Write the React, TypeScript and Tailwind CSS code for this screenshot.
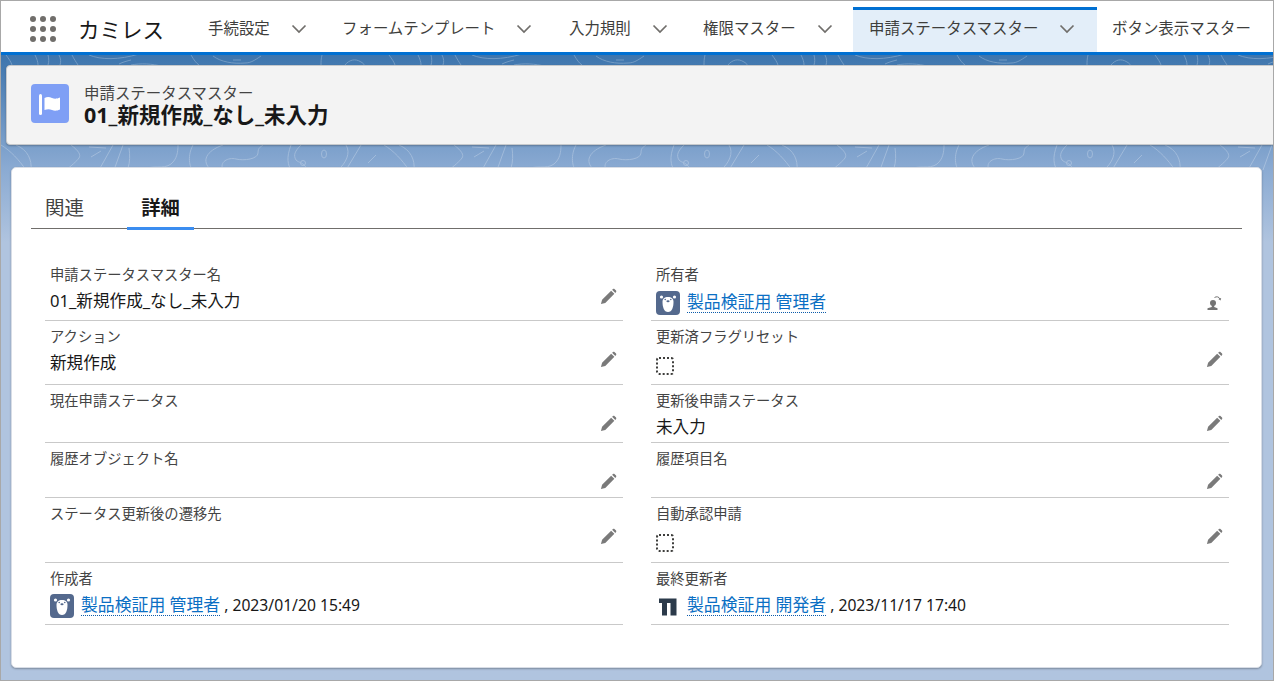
const font = { fontFamily: '"Noto Sans", "Noto Sans CJK JP", sans-serif' };

const navItems = [
  { label: "手続設定", w: "w-[134px]" },
  { label: "フォームテンプレート", w: "w-[227px]" },
  { label: "入力規則", w: "w-[134px]" },
  { label: "権限マスター", w: "w-[154px]" },
];

function Chevron() {
  return (
    <svg width="16" height="16" viewBox="0 0 16 16" className="shrink-0 text-[#706e6b]">
      <path d="M1.500 4.500 8 11l6.500-6.500" fill="none" stroke="currentColor" strokeWidth="1.700" />
    </svg>
  );
}

function AppGrid() {
  const dots = [0, 1, 2, 3, 4, 5, 6, 7, 8];
  return (
    <div className="grid grid-cols-3 gap-[4px] w-[26px]">
      {dots.map((d) => (
        <span key={d} className="w-[6px] h-[6px] rounded-full bg-[#706e6b]" />
      ))}
    </div>
  );
}

function Pencil() {
  return (
    <svg width="17" height="17" viewBox="0 0 18 18" className="text-[#7a7a7a]">
      <path d="M1 17l1.200-4.600L11.800 2.800l3.400 3.400L5.600 15.800 1 17z M12.800 1.800l1-.8c.5-.4 1.100-.4 1.500 0l1.700 1.700c.4.400.4 1 0 1.500l-.8 1z" fill="currentColor" />
    </svg>
  );
}

function ChangeOwner() {
  return (
    <svg width="16" height="16" viewBox="0 0 16 16" className="text-[#747474]">
      <circle cx="6" cy="8" r="3" fill="currentColor" />
      <path d="M4.800 10h2.400v2l3.300 1.300V15H.5v-1.700L4.800 12z" fill="currentColor" />
      <path d="M7.500 2.500c2-1.300 4.500-.8 5.500 1.500" fill="none" stroke="currentColor" strokeWidth="1" />
      <path d="M11.300 4l2.300 1.600.6-2.700z" fill="currentColor" />
    </svg>
  );
}

function Bear() {
  return (
    <svg width="24" height="24" viewBox="0 0 24 24" className="shrink-0">
      <rect width="24" height="24" rx="4" fill="#54698d" />
      <circle cx="5.500" cy="6" r="1.600" fill="#fff" />
      <circle cx="18.500" cy="6" r="1.600" fill="#fff" />
      <path d="M12 6c3.500 0 5.500 1.500 5.500 5 0 5-1.500 10-5.500 10s-5.500-5-5.500-10c0-3.500 2-5 5.500-5z" fill="#fff" />
      <circle cx="9.200" cy="8.500" r=".8" fill="#54698d" />
      <circle cx="14.800" cy="8.500" r=".8" fill="#54698d" />
      <ellipse cx="12" cy="10.200" rx="1.600" ry="1" fill="#54698d" />
    </svg>
  );
}

function DevLogo() {
  return (
    <svg width="24" height="24" viewBox="0 0 24 24" className="shrink-0">
      <path d="M3 4.500h17.500v17h-6V9H11v12.500H6V9H3z" fill="#2b3a4a" />
    </svg>
  );
}

function UserLink({ name }: { name: string }) {
  return (
    <a className="text-[#0b6fc4] text-[16.85px] border-b border-dotted border-[#0b5cab] leading-[20px] whitespace-nowrap">{name}</a>
  );
}

function EmptyCheck() {
  return <span className="block w-[18px] h-[18px] mt-[5px] rounded-[3px] border-2 border-dotted border-[#3e3e3c]" />;
}

function Field({ label, h, children, action, valueClass = "" }: { label: string; h: string; children?: React.ReactNode; action?: React.ReactNode; valueClass?: string }) {
  return (
    <div className={`relative border-b border-[#c9c9c9] px-[5px] pt-[6px] ${h}`}>
      <div className="text-[14.3px] leading-[20px] text-[#444444] whitespace-nowrap">{label}</div>
      <div className={`flex items-center gap-[7px] h-[28px] mt-[2px] text-[16.6px] text-[#181818] ${valueClass}`}>{children}</div>
      {action && <div className="absolute right-[6px] top-[30px]">{action}</div>}
    </div>
  );
}

// repeating topographic lines behind the page header
function Contours() {
  return (
    <svg className="absolute left-0 top-0 opacity-25" width="1274" height="115">
      <defs>
        <pattern id="topo" width="383" height="115" patternUnits="userSpaceOnUse">
          <g fill="none" stroke="#fff" strokeWidth="1">
            <path d="M5 0c3 4 5 7 6 10M34 0c2 4 3 7 3 10M47 0c1 4 1 7 0 10M58 0c2 4 2 7 1 10M71 0c2 4 4 7 6 10" />
            <path d="M88 0c12 5 30 5 50-1M118 9c4-2 8-3 12-4M130 10c10-2 22-1 30 1" />
            <path d="M190 0c3 5 5 8 8 10M212 1c8 6 20 8 32 7 6 0 10-3 16-7M232 5h8M320 10c0-3 0-6 1-10M344 10c4-5 10-7 16-3 2 1 3 2 3 3" />
          </g>
          <g transform="translate(0,88)" fill="none" stroke="#fff" strokeWidth="1">
            <path d="M15 2c12 5 16 15 15 25M70 2c8 6 10 10 8 13s-8 8-13 12" />
            <path d="M88 4l17 1M90 14l10-6M112 2 98 27M122 2l-9 25M128 5c1 7 1 14-1 20" />
            <path d="M142 27c10-6 20 0 28-6 6-5 7-12 7-19M192 2c-7 13-2 25 0 25" />
            <path d="M222 2c-17 6-22 16-12 25M222 27c-4-8 5-13 13-11s22 0 22-6 3-6 5-8" />
            <path d="M290 2c-5 13-3 20 0 25M300 2c-6 6-8 10-5 15 3 3 6 2 9 6 2 2 1 3 0 4" />
            <ellipse cx="323" cy="11" rx="2.500" ry="4" />
            <circle cx="302" cy="20" r="2.500" />
            <path d="M345 2c5 8 0 18-8 25M360 2l-15 25M367 20l8-8" />
            <path d="M0 2c10 6 18 15 25 25" />
          </g>
        </pattern>
      </defs>
      <rect width="1274" height="115" fill="url(#topo)" />
    </svg>
  );
}

export default function App() {
  return (
    <div style={font} className="relative w-[1274px] h-[681px] overflow-hidden border border-[#a8a8a8] bg-[#b0c4df]">
      {/* Top nav */}
      <div className="relative flex h-[54px] bg-white border-b-[3px] border-[#0070d2]">
        <div className="w-[29px]" />
        <div className="pt-[15px]">
          <AppGrid />
        </div>
        <div className="w-[22px]" />
        <div className="w-[126px] pt-[14px] text-[21.5px] leading-[30px] text-[#181818] whitespace-nowrap">カミレス</div>
        {navItems.map((n) => (
          <div key={n.label} className={`flex items-center gap-[21px] pl-[4px] pt-[4px] text-[15.45px] text-[#3e3e3c] whitespace-nowrap ${n.w}`}>
            <span>{n.label}</span>
            <Chevron />
          </div>
        ))}
        <div className="flex items-center gap-[21px] w-[244px] mt-[6px] border-t-[3px] border-[#0070d2] bg-[#e3eef9] pl-[16px] pb-[4px] text-[15.45px] text-[#3e3e3c] whitespace-nowrap">
          <span>申請ステータスマスター</span>
          <Chevron />
        </div>
        <div className="flex items-center pl-[15px] pt-[4px] text-[15.45px] text-[#3e3e3c] whitespace-nowrap">ボタン表示マスター</div>
      </div>

      {/* Page body */}
      <div className="relative h-[625px] bg-gradient-to-b from-[#3d75ad] via-[#8aaad2] via-[18%] to-[#b0c4df] to-[30%] pl-[5px]">
        <Contours />

        {/* Highlights */}
        <div className="relative flex items-center h-[80px] top-[10px] w-[1300px] rounded-[4px] bg-[#f3f3f3] border border-[#c6c9cc] shadow-[0_1px_2px_rgba(0,0,0,0.25)] pl-[24px]">
          <div className="flex items-center justify-center w-[38px] h-[39px] mb-[3px] rounded-[4px] bg-[#7f9ff5]">
            <svg width="26" height="26" viewBox="0 0 26 26">
              <rect x="2" y="3" width="3" height="21" rx="1.500" fill="#fff" />
              <path d="M7.500 7c3-1.500 5-1 7.500 0s4.500 1 8-.5v12c-3.500 1.500-5.500 1.500-8 .5s-4.500-1-7.500 0z" fill="#fff" />
            </svg>
          </div>
          <div className="ml-[15px] whitespace-nowrap">
            <div className="text-[15.45px] leading-[18px] text-[#444444]">申請ステータスマスター</div>
            <div className="text-[21.5px] leading-[25px] font-bold text-[#181818]">01_新規作成_なし_未入力</div>
          </div>
        </div>

        {/* Detail card */}
        <div className="absolute left-[10px] top-[112px] w-[1251px] h-[501px] rounded-[5px] bg-white border border-[#d8dde6] shadow-[0_1px_2px_rgba(0,0,0,0.3)]">
          <div className="flex mx-[19px] h-[61px] border-b border-[#706e6b]">
            <div className="flex items-center justify-start w-[67px] pl-[14px] pt-[19px] text-[19.5px] text-[#444444] whitespace-nowrap">関連</div>
            <div className="flex items-center justify-center ml-[29px] w-[67px] h-[62px] pt-[21px] text-[19.3px] font-bold text-[#181818] border-b-[3px] border-[#3b8df0] whitespace-nowrap">詳細</div>
          </div>
          <div className="grid grid-cols-[578px_578px] gap-x-[28px] mx-[33px] mt-[30px]">
            <Field label="申請ステータスマスター名" h="h-[62px]" action={<div className="-mt-[1px]"><Pencil /></div>}>
              01_新規作成_なし_未入力
            </Field>
            <Field label="所有者" h="h-[62px]" valueClass="pt-[3px]" action={<div className="mt-[6px]"><ChangeOwner /></div>}>
              <Bear />
              <UserLink name="製品検証用 管理者" />
            </Field>
            <Field label="アクション" h="h-[64px]" action={<Pencil />}>
              新規作成
            </Field>
            <Field label="更新済フラグリセット" h="h-[64px]" action={<Pencil />}>
              <EmptyCheck />
            </Field>
            <Field label="現在申請ステータス" h="h-[58px]" action={<Pencil />} />
            <Field label="更新後申請ステータス" h="h-[58px]" action={<Pencil />}>
              未入力
            </Field>
            <Field label="履歴オブジェクト名" h="h-[55px]" action={<Pencil />} />
            <Field label="履歴項目名" h="h-[55px]" action={<Pencil />} />
            <Field label="ステータス更新後の遷移先" h="h-[65px]" action={<Pencil />} />
            <Field label="自動承認申請" h="h-[65px]" action={<Pencil />}>
              <EmptyCheck />
            </Field>
            <Field label="作成者" h="h-[62px]" valueClass="pt-[1px]">
              <Bear />
              <UserLink name="製品検証用 管理者" />
              <span className="-ml-[3px] text-[15.7px] whitespace-nowrap">, 2023/01/20 15:49</span>
            </Field>
            <Field label="最終更新者" h="h-[62px]" valueClass="pt-[1px]">
              <DevLogo />
              <UserLink name="製品検証用 開発者" />
              <span className="-ml-[3px] text-[15.7px] whitespace-nowrap">, 2023/11/17 17:40</span>
            </Field>
          </div>
        </div>
      </div>
    </div>
  );
}
